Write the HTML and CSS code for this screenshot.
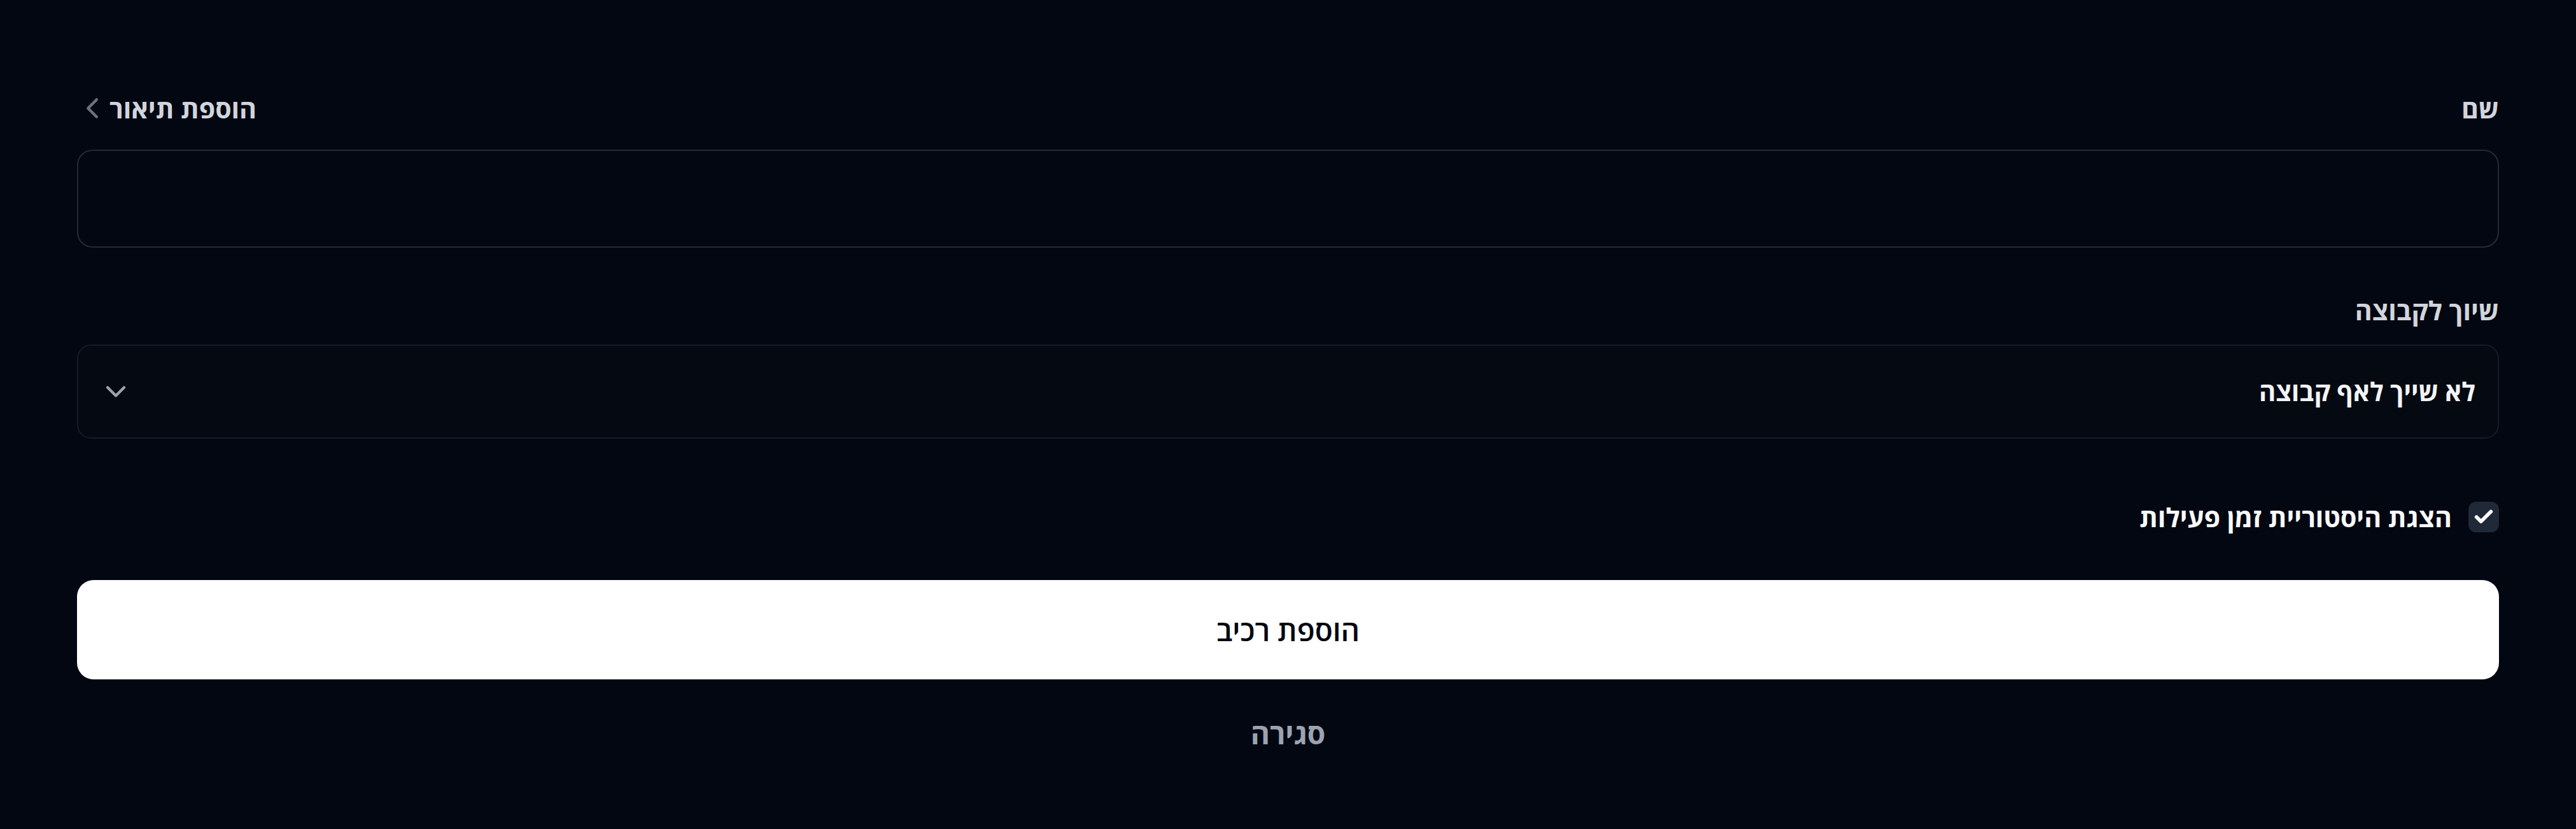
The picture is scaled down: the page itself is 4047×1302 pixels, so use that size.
FILE: index.html
```html
<!DOCTYPE html>
<html lang="he" dir="rtl">
<head>
<meta charset="utf-8">
<title>הוספת רכיב</title>
<link rel="stylesheet" href="styles.css">
</head>
<body>
<form class="form">
  <div class="field-head">
    <label class="label" for="name">שם</label>
    <button type="button" class="desc-toggle">
      <span>הוספת תיאור</span>
      <svg class="chev-left" viewBox="0 0 24 24" fill="none" stroke="currentColor" stroke-width="2" stroke-linecap="round" stroke-linejoin="round"><path d="m15 18-6-6 6-6"/></svg>
    </button>
  </div>
  <input id="name" class="text-input" type="text">

  <div class="field-head group-head">
    <label class="label">שיוך לקבוצה</label>
  </div>
  <div class="select">
    <span class="select-value">לא שייך לאף קבוצה</span>
    <svg class="chev-down" viewBox="0 0 24 24" fill="none" stroke="currentColor" stroke-width="2" stroke-linecap="round" stroke-linejoin="round"><path d="m6 9 6 6 6-6"/></svg>
  </div>

  <label class="check-row">
    <span class="checkbox">
      <svg viewBox="0 0 24 24" fill="none" stroke="currentColor" stroke-width="4" stroke-linecap="round" stroke-linejoin="round"><path d="M20 6 9 17l-5-5"/></svg>
    </span>
    <span class="check-label">הצגת היסטוריית זמן פעילות</span>
  </label>

  <button type="button" class="primary">הוספת רכיב</button>
  <button type="button" class="close">סגירה</button>
</form>
</body>
</html>
```

FILE: styles.css
```css
* { box-sizing: border-box; }

html, body {
  margin: 0;
  padding: 0;
  background: #030712;
  height: 100%;
}

body {
  font-family: "Open Sans", "DejaVu Sans", sans-serif;
  font-size: 41px;
  line-height: 54px;
  color: #f3f4f6;
}

.form {
  display: flex;
  flex-direction: column;
  padding: 143px 121px 0;
}

.field-head {
  display: flex;
  justify-content: space-between;
  align-items: center;
  height: 54px;
}

.label {
  font-weight: 700;
  color: #d1d5db;
}

.desc-toggle {
  display: flex;
  align-items: center;
  gap: 0;
  background: none;
  border: 0;
  padding: 0;
  margin-left: -3px;
  font: inherit;
  font-weight: 700;
  color: #d1d5db;
  cursor: pointer;
}

.chev-left {
  width: 54px;
  height: 54px;
  color: #6b7280;
}

.text-input {
  margin-top: 38px;
  height: 154px;
  width: 100%;
  background: #030712;
  border: 2.5px solid #242a36;
  border-radius: 24px;
  font: inherit;
  color: #f3f4f6;
  padding: 0 35px;
  outline: none;
}

.group-head {
  margin-top: 71px;
}

.select {
  margin-top: 27px;
  height: 148px;
  display: flex;
  align-items: center;
  justify-content: space-between;
  padding: 0 35px 0 33px;
  background: #050912;
  border: 2.5px solid #151b27;
  border-radius: 22px;
}

.select-value {
  font-size: 40px;
  font-weight: 700;
  color: #f3f4f6;
}

.chev-down {
  width: 52px;
  height: 52px;
  color: #9ca3af;
}

.check-row {
  margin-top: 96px;
  display: flex;
  align-items: center;
  gap: 26px;
  height: 54px;
}

.checkbox {
  width: 48px;
  height: 48px;
  border-radius: 12px;
  background: #1f2937;
  display: flex;
  align-items: center;
  justify-content: center;
  color: #ffffff;
}

.checkbox svg {
  width: 34px;
  height: 34px;
}

.check-label {
  font-weight: 700;
  color: #f9fafb;
}

.primary {
  margin-top: 72px;
  height: 156px;
  width: 100%;
  border: 0;
  border-radius: 26px;
  background: #ffffff;
  color: #030712;
  font: inherit;
  font-size: 46px;
  font-weight: 600;
  cursor: pointer;
}

.close {
  margin-top: 57px;
  align-self: center;
  background: none;
  border: 0;
  padding: 0;
  font: inherit;
  font-size: 46px;
  font-weight: 700;
  color: #9ca3af;
  cursor: pointer;
}
```
